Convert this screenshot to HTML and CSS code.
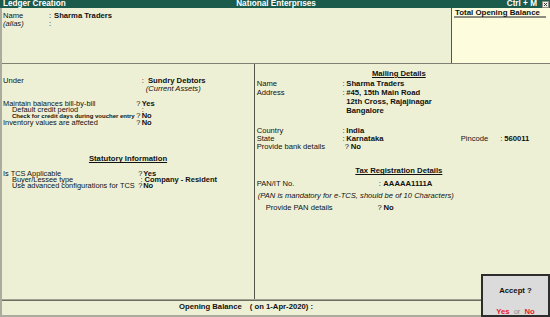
FILE: index.html
```html
<!DOCTYPE html>
<html>
<head>
<meta charset="utf-8">
<title>Ledger Creation</title>
<link rel="stylesheet" href="styles.css">
</head>
<body>
<div class="screen">
  <div class="titlebar">
    <span class="t-left">Ledger Creation</span>
    <span class="t-center">National Enterprises</span>
    <span class="t-right">Ctrl + M
      <svg class="close" width="7" height="7" viewBox="0 0 7 7"><rect x="0.5" y="0.5" width="6" height="6" fill="#ecece0" stroke="#8e8e84"/><path d="M2 2L5 5M5 2L2 5" stroke="#2a2a2a" stroke-width="0.9"/></svg>
    </span>
  </div>
  <div class="frame">
    <div class="header">
      <div class="hmain">
        <div class="hrow"><span class="hl">Name</span><span class="hs">:</span><b>Sharma Traders</b></div>
        <div class="hrow"><i class="hl">(alias)</i><span class="hs">:</span></div>
      </div>
      <div class="tob"><div class="tob-title">Total Opening Balance</div></div>
    </div>
    <div class="body">
      <div class="left">
        <div class="row tall lc"><span class="lbl">Under</span><span class="sep">:</span><b>Sundry Debtors</b></div>
        <div class="row tall note-ca"><i>(Current Assets)</i></div>
        <div class="grp1">
          <div class="row tight lq"><span class="lbl">Maintain balances bill-by-bill</span><span class="sep">?</span><b>Yes</b></div>
          <div class="row tight lc ind"><span class="lbl">Default credit period</span><span class="sep">:</span></div>
          <div class="row tight lq ind"><b class="lbl small">Check for credit days during voucher entry</b><span class="sep">?</span><b>No</b></div>
          <div class="row tight lq"><span class="lbl">Inventory values are affected</span><span class="sep">?</span><b>No</b></div>
        </div>
        <div class="heading stat-head"><b>Statutory Information</b></div>
        <div class="grp2">
          <div class="row tight sq"><span class="lbl">Is TCS Applicable</span><span class="sep">?</span><b>Yes</b></div>
          <div class="row tight sc ind"><span class="lbl">Buyer/Lessee type</span><span class="sep">:</span><b>Company - Resident</b></div>
          <div class="row tight sq ind"><span class="lbl">Use advanced configurations for TCS</span><span class="sep">?</span><b>No</b></div>
        </div>
      </div>
      <div class="right">
        <div class="heading mail-head"><b>Mailing Details</b></div>
        <div class="row r-name mc"><span class="lbl">Name</span><span class="sep">:</span><b>Sharma Traders</b></div>
        <div class="row r-addr mc"><span class="lbl">Address</span><span class="sep">:</span>
          <div class="addr"><b>#45, 15th Main Road</b><b>12th Cross, Rajajinagar</b><b>Bangalore</b></div>
        </div>
        <div class="row r-std mc country"><span class="lbl">Country</span><span class="sep">:</span><b>India</b></div>
        <div class="row r-std mc"><span class="lbl">State</span><span class="sep">:</span><b class="state-val">Karnataka</b><span class="pin-lbl">Pincode</span><span class="pin-sep">:</span><b>560011</b></div>
        <div class="row r-std mq bank"><span class="lbl">Provide bank details</span><span class="sep">?</span><b>No</b></div>
        <div class="heading tax-head"><b>Tax Registration Details</b></div>
        <div class="tax">
          <div class="row r-tax pc"><span class="lbl">PAN/IT No.</span><span class="sep">:</span><b>AAAAA1111A</b></div>
          <div class="row r-tax note-pan"><i>(PAN is mandatory for e-TCS, should be of 10 Characters)</i></div>
          <div class="row r-tax pq ind"><span class="lbl">Provide PAN details</span><span class="sep">?</span><b>No</b></div>
        </div>
      </div>
    </div>
    <div class="footer"><b>Opening Balance</b><b class="on-date">( on 1-Apr-2020) :</b></div>
  </div>
  <div class="accept">
    <b class="acc-q">Accept ?</b>
    <div class="acc-opts"><b class="red">Yes</b><span class="or">or</span><b class="red">No</b></div>
  </div>
</div>
</body>
</html>
```

FILE: styles.css
```css
* { box-sizing: border-box; margin: 0; padding: 0; }
html, body { width: 550px; height: 317px; overflow: hidden; }
body {
  font-family: "Liberation Sans", Arial, sans-serif;
  font-size: 7.6px;
  color: #111;
  background: #eef0d5;
}
b { font-weight: bold; font-size: 7.7px; }
i { font-style: italic; }

.screen { position: relative; width: 550px; height: 317px; display: flex; flex-direction: column; }

.titlebar {
  height: 8px;
  background: #1a5b4b;
  color: #fff;
  font-weight: bold;
  font-size: 8.2px;
  line-height: 8px;
  display: grid;
  grid-template-columns: 1fr auto 1fr;
  padding: 0 1px 0 3px;
  white-space: nowrap;
}
.t-right { justify-self: end; display: flex; align-items: center; gap: 5px; }
.close { display: block; }

.frame {
  flex: 1;
  display: flex;
  flex-direction: column;
  border-left: 2px solid #acac9e;
  border-bottom: 2px solid #acac9e;
}

.header { height: 56px; display: flex; border-bottom: 1px solid #7f7f72; }
.hmain { flex: 1; padding: 3.5px 0 0 1px; }
.hrow { height: 8.3px; line-height: 8.3px; display: flex; white-space: nowrap; }
.hl { width: 46px; }
.hs { width: 5px; }
.tob { width: 99px; border-left: 1px solid #55554a; background: #fdfdde; }
.tob-title {
  margin: 0 4px 0 2px;
  padding: 2px 0 0 1px;
  line-height: 6px;
  font-weight: bold;
  font-size: 7.9px;
  border-bottom: 2px solid #8c8c80;
  white-space: nowrap;
}

.body { flex: 1; display: flex; }
.left { width: 253px; border-right: 1px solid #55554a; padding: 13px 0 0 1px; }
.right { flex: 1; padding: 0 0 0 1.7px; }

.row { display: flex; white-space: nowrap; }
.lbl { display: block; flex: none; }
.sep { display: block; flex: none; }
.ind .lbl { padding-left: 9px; }
.small { font-size: 6px; }

.tall { height: 8px; line-height: 8px; }
.tight { height: 6.3px; line-height: 6.3px; font-size: 7.4px; }
.tight b { font-size: 7.5px; }
.tight b.small { font-size: 6px; }
.lq .lbl { width: 133.2px; } .lq .sep { width: 5.5px; }
.lc .lbl { width: 138.7px; } .lc .sep { width: 6.3px; }
.note-ca { padding-left: 142.7px; }
.grp1 { margin-top: 7.85px; }

.heading { height: 9px; line-height: 9px; text-align: center; }
.heading b { text-decoration: underline; text-underline-offset: 1px; }
.stat-head { margin-top: 28.4px; padding-right: 1px; }
.grp2 { margin-top: 7.8px; }
.grp2 .tight { height: 6px; line-height: 6px; }
.sq .lbl { width: 135.2px; } .sq .sep { width: 5px; }
.sc .lbl { width: 137.6px; } .sc .sep { width: 3.9px; }

.mail-head { margin-top: 4.8px; padding-right: 9px; }
.r-name { margin-top: 2.2px; height: 7.7px; line-height: 7.7px; }
.mc .lbl { width: 85.8px; } .mc .sep { width: 3.8px; }
.r-addr { line-height: 9px; }
.addr { display: flex; flex-direction: column; }
.r-std { height: 8px; line-height: 8px; }
.country { margin-top: 12px; }
.state-val { width: 114.4px; }
.pin-lbl { width: 39.5px; }
.pin-sep { width: 4px; }
.bank { margin-top: 0.6px; }
.mq .lbl { width: 88px; } .mq .sep { width: 6px; }

.tax-head { margin-top: 15.2px; padding-right: 9px; }
.tax { margin-top: 2.9px; }
.r-tax { height: 11.7px; line-height: 11.7px; }
.pc .lbl { width: 122px; } .pc .sep { width: 4.6px; }
.note-pan { padding-left: 1px; }
.pq .lbl { width: 120.7px; } .pq .sep { width: 6px; }

.footer {
  height: 16px;
  border-top: 1px solid #a2a294;
  box-shadow: inset 0 1px 0 #6e6e60;
  padding: 1px 0 0 177px;
  line-height: 11.4px;
  white-space: nowrap;
}
.on-date { margin-left: 8px; }

.accept {
  position: absolute;
  right: 0;
  bottom: 0;
  width: 69px;
  height: 43px;
  border: 2px solid #2d2d2d;
  background: #dbdbdb;
  display: flex;
  flex-direction: column;
  align-items: center;
  padding-top: 11px;
}
.acc-q { line-height: 8px; }
.acc-opts { margin-top: 12.7px; line-height: 8px; display: flex; }
.red { color: #e8202a; }
.or { color: #8e8e8e; margin: 0 4px; }
```
